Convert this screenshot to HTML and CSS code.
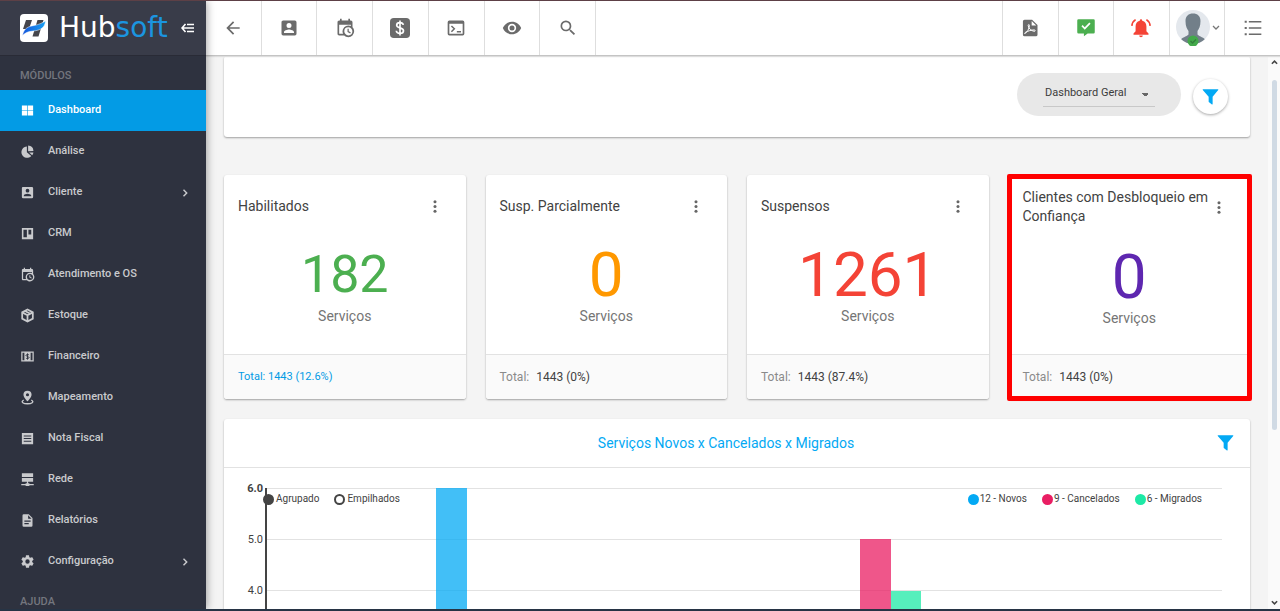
FILE: index.html
```html
<!DOCTYPE html>
<html lang="pt-BR">
<head>
<meta charset="utf-8">
<meta name="viewport" content="width=device-width, initial-scale=1">
<title>Hubsoft - Dashboard</title>
<link rel="stylesheet" href="styles.css">
</head>
<body>
<svg class="sprite" aria-hidden="true">
  <symbol id="account" viewBox="0 0 24 24"><path d="M6,17C6,15 10,13.9 12,13.9C14,13.9 18,15 18,17V18H6M15,9A3,3 0 0,1 12,12A3,3 0 0,1 9,9A3,3 0 0,1 12,6A3,3 0 0,1 15,9M3,5V19A2,2 0 0,0 5,21H19A2,2 0 0,0 21,19V5A2,2 0 0,0 19,3H5C3.89,3 3,3.9 3,5Z"/></symbol>
  <symbol id="calendar" viewBox="0 0 24 24"><path d="M15,13H16.5V15.82L18.94,17.23L18.19,18.53L15,16.69V13M19,8H5V19H9.67C9.24,18.09 9,17.07 9,16A7,7 0 0,1 16,9C17.07,9 18.09,9.24 19,9.67V8M5,21C3.89,21 3,20.1 3,19V5C3,3.89 3.89,3 5,3H6V1H8V3H16V1H18V3H19A2,2 0 0,1 21,5V11.1C22.24,12.36 23,14.09 23,16A7,7 0 0,1 16,23C14.09,23 12.36,22.24 11.1,21H5M16,11.15A4.85,4.85 0 0,0 11.15,16C11.15,18.68 13.32,20.85 16,20.85A4.85,4.85 0 0,0 20.85,16C20.85,13.32 18.68,11.15 16,11.15Z"/></symbol>
  <symbol id="chevron" viewBox="0 0 24 24"><path d="M8 17.500 13.500 12 8 6.500 10 4.500l7.500 7.500-7.500 7.500z"/></symbol>
  <symbol id="dots" viewBox="0 0 24 24"><circle cx="12" cy="4" r="2.6"/><circle cx="12" cy="12" r="2.6"/><circle cx="12" cy="20" r="2.6"/></symbol>
  <symbol id="funnel" viewBox="0 0 24 24"><path d="M1.500 1h21q1 0 .4 1L15 11.500v10.500q0 1-1 .5l-4-3q-.6-.5-.6-1.200V11.500L1.100 2q-.6-1 .4-1z"/></symbol>
</svg>
<div class="app">
  <aside class="sidebar">
    <div class="brand">
      <svg class="brand-mark" viewBox="0 0 28 28" aria-hidden="true">
        <defs><linearGradient id="swoosh" x1="0" x2="1"><stop offset="0" stop-color="#1556dc"/><stop offset="1" stop-color="#18a0f2"/></linearGradient></defs>
        <rect width="28" height="28" rx="4" fill="#fff"/>
        <path d="M6 6h6L9 15H3zM17.500 6h6L18.500 22.500h-6z" fill="#45454b"/>
        <path d="M2.500 21.500C4 13.500 9 12.500 14 11.500 19 10.500 22 9 25.500 7c-.5 6.500-5 9-10.500 9.800-6 .7-8.500 1-12.500 4.700z" fill="url(#swoosh)" stroke="#fff" stroke-width=".5"/>
      </svg>
      <span class="brand-name">Hub<span class="brand-accent">soft</span></span>
      <button class="fold" aria-label="Recolher menu"><svg viewBox="0 0 14 10"><path d="M4.500 1 1 5l3.500 4M1 5h12M6 1.500h7M6 8.500h7" fill="none" stroke="currentColor" stroke-width="1.600"/></svg></button>
    </div>
    <h2 class="menu-heading">MÓDULOS</h2>
    <nav class="menu">
      <a class="menu-item active" href="#"><svg class="mi" viewBox="0 0 24 24"><path d="M3 4h8.500v7.500H3zM12.500 4H21v7.500h-8.500zM3 12.500h8.500V20H3zM12.500 12.500H21V20h-8.500z"/></svg><span>Dashboard</span></a>
      <a class="menu-item" href="#"><svg class="mi" viewBox="0 0 24 24"><path d="M11 4v9l7 6A9 9 0 1 1 11 4zM13 2.500a9 9 0 0 1 8.500 8.500L13 11.500zM14.500 13.500h7a9 9 0 0 1-2 4.500z"/></svg><span>Análise</span></a>
      <a class="menu-item" href="#"><svg class="mi"><use href="#account"/></svg><span>Cliente</span><svg class="more"><use href="#chevron"/></svg></a>
      <a class="menu-item" href="#"><svg class="mi" viewBox="0 0 24 24"><path fill-rule="evenodd" d="M3 3h18v18H3zM5.500 6v12H11V6zM13.500 6v7.500H18V6z"/></svg><span>CRM</span></a>
      <a class="menu-item" href="#"><svg class="mi"><use href="#calendar"/></svg><span>Atendimento e OS</span></a>
      <a class="menu-item" href="#"><svg class="mi" viewBox="0 0 24 24"><path d="M12 2.500 20.500 7v10L12 21.500 3.500 17V7zM3.500 7l8.500 4.500L20.500 7M12 11.500v10M8 4.800l8.500 4.500" fill="none" stroke="currentColor" stroke-width="2.800"/></svg><span>Estoque</span></a>
      <a class="menu-item" href="#"><svg class="mi" viewBox="0 0 24 24"><path fill-rule="evenodd" d="M2 4h20v16H2zM4 6v12h3V6zM17 6v12h3V6z"/><path d="M14.500 9.500c-1-1-5-1-5 .8s5 1.500 5 3.400-4 2-5 .8M12 7v10" fill="none" stroke="#2e323f" stroke-width="1.500"/></svg><span>Financeiro</span></a>
      <a class="menu-item" href="#"><svg class="mi" viewBox="0 0 24 24"><path fill-rule="evenodd" d="M12 1a6.500 6.500 0 0 1 6.500 6.500C18.500 12 12 18 12 18S5.500 12 5.500 7.500A6.500 6.500 0 0 1 12 1zM12 5a2.500 2.500 0 1 0 0 5 2.500 2.500 0 0 0 0-5z"/><path d="M6 16c-6 3.500 0 6 6 6s12-2.500 6-6" fill="none" stroke="currentColor" stroke-width="2.200"/></svg><span>Mapeamento</span></a>
      <a class="menu-item" href="#"><svg class="mi" viewBox="0 0 24 24"><path fill-rule="evenodd" d="M3 3h18v18H3zM6 7v1.600h12V7zM6 11.200v1.600h12v-1.600zM6 15.400V17h12v-1.600z"/></svg><span>Nota Fiscal</span></a>
      <a class="menu-item" href="#"><svg class="mi" viewBox="0 0 24 24"><path d="M3 2h18v6H3zM3 9.500h18v6H3zM11 15h2v3h2v1h7v2h-7v1.500H9V21H2v-2h7v-1h2z"/></svg><span>Rede</span></a>
      <a class="menu-item" href="#"><svg class="mi" viewBox="0 0 24 24"><path fill-rule="evenodd" d="M6 2h8l6 6v12a2 2 0 0 1-2 2H6a2 2 0 0 1-2-2V4a2 2 0 0 1 2-2zM13 3.500V9h5.500zM7 12v1.800h10V12zM7 16v1.800h7V16z"/></svg><span>Relatórios</span></a>
      <a class="menu-item" href="#"><svg class="mi" viewBox="0 0 24 24"><path d="M12,15.5A3.5,3.5 0 0,1 8.500,12A3.5,3.5 0 0,1 12,8.500A3.5,3.5 0 0,1 15.500,12A3.5,3.5 0 0,1 12,15.500M19.430,12.970C19.470,12.650 19.500,12.330 19.500,12C19.500,11.670 19.470,11.340 19.430,11L21.540,9.370C21.730,9.220 21.780,8.950 21.660,8.730L19.660,5.270C19.540,5.050 19.270,4.960 19.050,5.050L16.560,6.050C16.040,5.660 15.500,5.320 14.870,5.070L14.500,2.420C14.460,2.180 14.250,2 14,2H10C9.750,2 9.540,2.180 9.500,2.420L9.130,5.070C8.500,5.320 7.960,5.660 7.440,6.050L4.950,5.050C4.730,4.960 4.460,5.050 4.340,5.270L2.340,8.730C2.210,8.950 2.270,9.220 2.460,9.370L4.570,11C4.530,11.340 4.500,11.670 4.500,12C4.500,12.330 4.530,12.650 4.570,12.970L2.460,14.630C2.270,14.780 2.210,15.050 2.340,15.270L4.340,18.730C4.460,18.950 4.730,19.030 4.950,18.950L7.440,17.940C7.960,18.340 8.500,18.680 9.130,18.930L9.500,21.580C9.540,21.820 9.750,22 10,22H14C14.250,22 14.460,21.820 14.500,21.580L14.870,18.930C15.500,18.670 16.040,18.340 16.560,17.940L19.050,18.950C19.270,19.030 19.540,18.950 19.660,18.730L21.660,15.270C21.780,15.050 21.730,14.780 21.540,14.630L19.430,12.970Z"/></svg><span>Configuração</span><svg class="more"><use href="#chevron"/></svg></a>
    </nav>
    <h2 class="menu-heading">AJUDA</h2>
  </aside>

  <div class="page">
    <header class="topbar">
      <div class="tools tools-left">
        <button class="tool" aria-label="Voltar"><svg viewBox="0 0 24 24"><path d="M20 11H7.830l5.590-5.590L12 4l-8 8 8 8 1.410-1.410L7.830 13H20z"/></svg></button>
        <button class="tool" aria-label="Clientes"><svg><use href="#account"/></svg></button>
        <button class="tool" aria-label="Agenda"><svg><use href="#calendar"/></svg></button>
        <button class="tool" aria-label="Financeiro"><svg viewBox="0 0 24 24"><rect width="24" height="24" rx="4.500"/><path d="M16 8.300c-.4-2-2-2.800-4-2.800-2.300 0-4 1.100-4 3.100 0 4.200 8.200 2.200 8.200 6.600 0 2.200-1.900 3.300-4.200 3.300s-4.200-1-4.500-3.200M12 3v18" fill="none" stroke="#fff" stroke-width="2"/></svg></button>
        <button class="tool" aria-label="Console"><svg viewBox="0 0 24 24"><path fill-rule="evenodd" d="M4 3h16a2 2 0 0 1 2 2v14a2 2 0 0 1-2 2H4a2 2 0 0 1-2-2V5a2 2 0 0 1 2-2zM4 7v12h16V7z"/><path d="M6.500 9.500 10 13l-3.500 3.500M13 16.500h5" fill="none" stroke="currentColor" stroke-width="1.800"/></svg></button>
        <button class="tool" aria-label="Visualizar"><svg viewBox="0 0 24 24"><path d="M12,9A3,3 0 0,0 9,12A3,3 0 0,0 12,15A3,3 0 0,0 15,12A3,3 0 0,0 12,9M12,17A5,5 0 0,1 7,12A5,5 0 0,1 12,7A5,5 0 0,1 17,12A5,5 0 0,1 12,17M12,4.500C7,4.500 2.730,7.610 1,12C2.730,16.390 7,19.500 12,19.500C17,19.500 21.270,16.390 23,12C21.270,7.610 17,4.500 12,4.500Z"/></svg></button>
        <button class="tool" aria-label="Pesquisar"><svg viewBox="0 0 24 24"><path d="M9.500,3A6.5,6.5 0 0,1 16,9.500C16,11.110 15.410,12.590 14.440,13.730L14.710,14H15.500L20.500,19L19,20.500L14,15.500V14.710L13.730,14.440C12.590,15.410 11.110,16 9.500,16A6.5,6.5 0 0,1 3,9.500A6.5,6.5 0 0,1 9.500,3M9.500,5C7,5 5,7 5,9.500C5,12 7,14 9.500,14C12,14 14,12 14,9.500C14,7 12,5 9.500,5Z"/></svg></button>
      </div>
      <div class="tools tools-right">
        <button class="tool" aria-label="Relatórios PDF"><svg viewBox="0 0 24 24"><path fill-rule="evenodd" d="M5.500 2h9L21 8.500V20a2 2 0 0 1-2 2H5.500a2 2 0 0 1-2-2V4a2 2 0 0 1 2-2zM14 3.500V9h5.500z"/><path d="M6 18.500c2.500-1 5-5.500 5.300-9.500.2-1.600-1.800-1.500-1.500.2.700 3.500 3.700 6.300 7.400 6.800 1.600.1 1.400-1.700-.2-1.700-3.500.1-7.500 1.200-10.500 3-1 .6-1.300 1.500-.5 1.200z" fill="none" stroke="#fff" stroke-width="1.200"/></svg></button>
        <button class="tool green" aria-label="Mensagens"><svg viewBox="0 0 24 24"><path fill-rule="evenodd" d="M3 1.500h18a1.500 1.500 0 0 1 1.500 1.500v14a1.500 1.500 0 0 1-1.500 1.500h-7L9.500 22v-3.500H3A1.500 1.500 0 0 1 1.500 17V3A1.500 1.500 0 0 1 3 1.500zM8 8.500l-1.500 1.500 4 4 7-7L16 5.500l-5.500 5.500z"/></svg></button>
        <button class="tool red" aria-label="Alertas"><svg viewBox="0 0 24 24"><path d="M12 1.500q1.500 0 1.500 1.700c3.500.8 5 3.500 5 7V16l2.500 2.500V20H3v-1.500L5.500 16v-5.800c0-3.500 1.500-6.200 5-7Q10.500 1.500 12 1.500zM9.800 21h4.400a2.200 2.200 0 0 1-4.400 0z"/><path d="M5.500 2Q1.500 4.500 1 9.500M18.500 2q4 2.500 4.500 7.500" fill="none" stroke="currentColor" stroke-width="2"/></svg></button>
        <button class="tool" aria-label="Perfil"><svg class="avatar" viewBox="-1 0 46 36"><defs><clipPath id="face"><circle cx="18" cy="17" r="17"/></clipPath></defs><circle cx="18" cy="17" r="17" fill="#e4e8ed"/><g clip-path="url(#face)" fill="#727f89"><path d="M10.500 11c0-5 3-7.500 7.500-7.500s7.500 2.500 7.500 7.500c0 5-1.500 8-3 10v3.500c2 2.500 7 2.500 8 6V36H5.500v-5.500c1-3.500 6-3.500 8-6V21c-1.500-2-3-5-3-10z"/></g><circle cx="18" cy="31" r="5.500" fill="#43a94a"/><path d="m15.500 31 2 2 3.500-3.500" fill="none" stroke="#337f3c" stroke-width="1.300"/><path d="m38 16 3 3 3-3" fill="none" stroke="#777" stroke-width="1.300"/></svg></button>
        <button class="tool" aria-label="Lista"><svg viewBox="0 0 24 24"><path d="M2 4.500h2.500M2 12h2.500M2 19.500h2.500" stroke="currentColor" stroke-width="2.500"/><path d="M7 4.500h15M7 12h15M7 19.500h15" stroke="currentColor" stroke-width="1.700"/></svg></button>
      </div>
    </header>

    <div class="viewport">
      <main class="content">
        <section class="card filters">
          <div class="picker"><select aria-label="Dashboard"><option>Dashboard Geral</option></select></div>
          <button class="round" aria-label="Filtrar"><svg><use href="#funnel"/></svg></button>
        </section>

        <section class="stats">
          <article class="card stat">
            <div class="stat-head"><h3>Habilitados</h3><button class="dots" aria-label="Opções"><svg><use href="#dots"/></svg></button></div>
            <div class="stat-body"><strong class="number small green">182</strong><span>Serviços</span></div>
            <footer><a href="#">Total: 1443 (12.6%)</a></footer>
          </article>
          <article class="card stat">
            <div class="stat-head"><h3>Susp. Parcialmente</h3><button class="dots" aria-label="Opções"><svg><use href="#dots"/></svg></button></div>
            <div class="stat-body"><strong class="number orange">0</strong><span>Serviços</span></div>
            <footer><span class="label">Total:</span><span>1443 (0%)</span></footer>
          </article>
          <article class="card stat">
            <div class="stat-head"><h3>Suspensos</h3><button class="dots" aria-label="Opções"><svg><use href="#dots"/></svg></button></div>
            <div class="stat-body"><strong class="number red">1261</strong><span>Serviços</span></div>
            <footer><span class="label">Total:</span><span>1443 (87.4%)</span></footer>
          </article>
          <article class="card stat highlighted">
            <div class="stat-head"><h3>Clientes com Desbloqueio em Confiança</h3><button class="dots" aria-label="Opções"><svg><use href="#dots"/></svg></button></div>
            <div class="stat-body"><strong class="number purple">0</strong><span>Serviços</span></div>
            <footer><span class="label">Total:</span><span>1443 (0%)</span></footer>
          </article>
        </section>

        <section class="card chart">
          <div class="chart-head"><h3>Serviços Novos x Cancelados x Migrados</h3><button class="plain" aria-label="Filtrar gráfico"><svg><use href="#funnel"/></svg></button></div>
          <div class="chart-body">
            <div class="axis"><b>6.0</b><span>5.0</span><span>4.0</span></div>
            <div class="plot">
              <i class="bar blue" style="left:17.7%;height:100%"></i>
              <i class="bar pink" style="left:62.1%;height:83.33%"></i>
              <i class="bar mint" style="left:65.3%;height:66.67%"></i>
              <div class="legend">
                <label><input type="radio" name="mode" checked>Agrupado</label>
                <label><input type="radio" name="mode">Empilhados</label>
                <ul class="series">
                  <li class="blue">12 - Novos</li>
                  <li class="pink">9 - Cancelados</li>
                  <li class="mint">6 - Migrados</li>
                </ul>
              </div>
            </div>
          </div>
        </section>
      </main>
      <div class="scrollbar" aria-hidden="true">
        <svg viewBox="0 0 8 6"><path d="M1 5l3-3 3 3" fill="none" stroke="#444" stroke-width="1.800"/></svg>
        <div class="thumb"></div>
        <svg viewBox="0 0 8 6"><path d="M1 1l3 3 3-3" fill="none" stroke="#444" stroke-width="1.800"/></svg>
      </div>
    </div>
  </div>
</div>
</body>
</html>
```
FILE: styles.css
```css
* { box-sizing: border-box; }
body { margin: 0; font: 12px/16px Roboto, "Liberation Sans", sans-serif; color: #424242; }
h2, h3, ul { margin: 0; padding: 0; font-weight: 400; list-style: none; }
button { padding: 0; border: 0; background: none; color: inherit; font: inherit; cursor: pointer; }
a { color: inherit; text-decoration: none; }
svg { fill: currentColor; flex: none; }
.sprite { display: none; }

.app {
  display: grid; grid-template-columns: 206px minmax(0, 1fr);
  height: 100vh; overflow: hidden;
  border-top: 1px solid #5d4046; border-bottom: 2px solid #273445;
}

/* Sidebar */
.sidebar { z-index: 1; background: #2e323f; color: #c9cacd; box-shadow: 1px 0 8px rgba(0, 0, 0, .35); overflow: hidden; }
.brand { display: flex; align-items: center; height: 55px; padding: 0 11px 0 20px; background: #393c49; border-bottom: 1px solid #292b36; }
.brand-mark { width: 28px; height: 28px; margin-right: 11px; }
.brand-name { flex: 1; font: 28px/32px "DejaVu Sans", sans-serif; color: #fff; }
.brand-accent { color: #1b95e0; }
.fold { display: flex; color: #fff; }
.fold svg { width: 14px; height: 10px; }
.menu-heading { height: 34px; padding-left: 20px; font-size: 11px; font-weight: 500; line-height: 40px; color: #74767e; }
.menu-item { display: flex; align-items: center; height: 41px; padding: 0 15px 0 20px; font-size: 11px; font-weight: 500; }
.menu-item span { flex: 1; padding: 0 0 2px 13px; }
.mi { width: 15px; height: 15px; }
.more { width: 12px; height: 12px; }
.menu-item.active { background: #039be5; color: #fff; }

/* Top bar */
.page { display: flex; flex-direction: column; min-width: 0; min-height: 0; }
.topbar { display: flex; justify-content: space-between; height: 55px; flex: none; background: #fff; border-bottom: 1px solid #c4c4c4; box-shadow: 0 1px 1px #ddd; z-index: 0; }
.tools { display: grid; grid-auto-flow: column; grid-auto-columns: 1fr; }
.tools-left { width: 390px; }
.tools-right { width: 278px; }
.tool { display: flex; align-items: center; justify-content: center; color: #6b6b6b; }
.tools-left .tool { border-right: 1px solid #dedede; }
.tools-right .tool { border-left: 1px solid #dedede; }
.tool svg { width: 20px; height: 20px; }
.tool .avatar { width: 46px; height: 36px; }
.green, .tool.green { color: #4caf50; }
.red, .tool.red { color: #f44336; }
.orange { color: #ff9800; }
.purple { color: #5e27b0; }

/* Content */
.viewport { display: grid; grid-template-columns: minmax(0, 1fr) 12px; flex: 1; min-height: 0; }
.content { padding: 0 18px; background: #f4f4f4; overflow: hidden; }
.card { background: #fff; border-radius: 3px; box-shadow: 0 1px 2px rgba(0, 0, 0, .35); }
.filters { display: flex; justify-content: flex-end; align-items: center; gap: 12px; height: 81px; padding-right: 22px; }
.picker { align-self: flex-start; margin-top: 17px; padding: 9px 26px; border-radius: 22px; background: #e8e8e8; }
.picker select {
  display: block; appearance: none; width: 112px; height: 25px; padding: 0 2px 2px; border: 0; border-bottom: 1px solid #c8c8c8; border-radius: 0;
  font: inherit; font-size: 11px; color: #3c3c3c;
  background: linear-gradient(to bottom right, #666 50%, transparent 50%) 102px 11px / 4px 4px no-repeat, linear-gradient(to bottom left, #666 50%, transparent 50%) 98px 11px / 4px 4px no-repeat;
}
.round { display: flex; align-items: center; justify-content: center; width: 35px; height: 35px; border-radius: 50%; box-shadow: 0 1px 3px rgba(0, 0, 0, .35); color: #03a9f4; }
.round svg, .plain svg { width: 17px; height: 18px; }
.stats { display: grid; grid-template-columns: repeat(4, minmax(0, 1fr)); gap: 20px; margin: 38px 0 20px; }
.stat { display: flex; flex-direction: column; height: 224px; position: relative; }
.stat-head { display: flex; align-items: center; justify-content: space-between; min-height: 62px; padding: 13px 24px 13px 14px; }
.stat-head h3 { font-size: 14px; line-height: 19px; }
.dots { display: flex; color: #666; }
.dots svg { width: 14px; height: 15px; }
.stat-body { display: flex; flex-direction: column; align-items: center; flex: 1; padding-top: 7px; font-size: 14px; line-height: 20px; color: #757575; }
.number { font-size: 62px; line-height: 62px; font-weight: 400; }
.number.small { font-size: 52px; }
.stat footer { display: flex; gap: 7px; align-items: center; height: 45px; padding: 0 14px; border-top: 1px solid #e2e2e2; background: #fafafa; border-radius: 0 0 3px 3px; }
.stat footer a { font-size: 11px; color: #039be5; }
.label { color: #8a8a8a; }
.highlighted::after { content: ""; position: absolute; inset: -1px -2px -2px; border: 5px solid #f00; border-radius: 2px; pointer-events: none; }

/* Chart */
.chart-head { display: flex; align-items: center; height: 49px; padding-right: 16px; border-bottom: 1px solid #e2e2e2; color: #03a9f4; }
.chart-head h3 { flex: 1; padding-left: 11px; font-size: 14px; text-align: center; color: #03a9f4; }
.plain { display: flex; }
.chart-body { display: flex; padding: 20px 28px 40px 20px; font-size: 11px; }
.axis { width: 21px; text-align: right; padding-right: 2px; }
.axis > * { display: block; height: 51px; line-height: 2px; }
.plot { flex: 1; position: relative; height: 308px; border-left: 2px solid #444; background: repeating-linear-gradient(#e2e2e2 0 1px, transparent 1px 51px); }
.bar { position: absolute; bottom: 0; width: 3.2%; opacity: .75; }
.legend { position: relative; display: flex; gap: 15px; height: 22px; align-items: center; padding-right: 20px; font-size: 10px; }
.legend label { display: flex; align-items: center; gap: 2px; }
.legend label:first-child { margin-left: -4px; }
.legend input { appearance: none; width: 11px; height: 11px; margin: 0; border: 2px solid #444; border-radius: 50%; }
.legend input:checked { background: #444; }
.series { display: flex; gap: 15px; margin-left: auto; }
.series li { display: flex; align-items: center; gap: 1px; }
.series li::before { content: ""; width: 11px; height: 11px; border-radius: 50%; }
.bar.blue, .series .blue::before { background: #03a9f4; }
.bar.pink, .series .pink::before { background: #e91e63; }
.bar.mint, .series .mint::before { background: #1de9a6; }

/* Scroll rail */
.scrollbar { display: flex; flex-direction: column; align-items: center; padding: 3px 0; background: #fafafa; }
.scrollbar svg { width: 7px; height: 6px; }
.thumb { width: 5px; flex: 2; margin: 15px 0 auto; max-height: 350px; border-radius: 3px; background: #d0dae4; }
.scrollbar svg:last-child { margin-top: auto; }
```
